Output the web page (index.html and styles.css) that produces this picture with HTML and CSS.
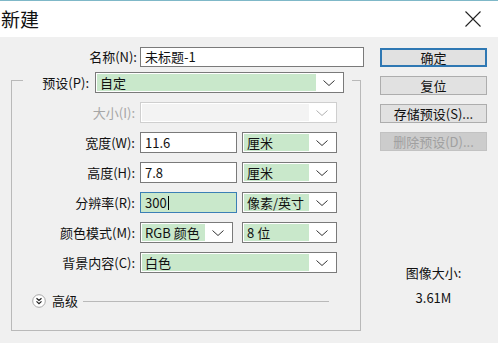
FILE: index.html
```html
<!DOCTYPE html>
<html lang="zh">
<head>
<meta charset="utf-8">
<title>新建</title>
<link rel="stylesheet" href="styles.css">
</head>
<body>
<div class="window">
  <div class="titlebar">
    <span class="title">新建</span>
    <svg class="close" width="16" height="16" viewBox="0 0 16 16"><path d="M0.5 0.5 L15.5 15.5 M15.5 0.5 L0.5 15.5" stroke="#222" stroke-width="1.1" fill="none"/></svg>
  </div>
  <div class="body">
    <div class="main">
      <div class="name-row">
        <span class="label">名称(N):</span>
        <div class="field name-field">未标题-1</div>
      </div>
      <fieldset class="group">
        <legend class="preset-row">
          <span class="label">预设(P):</span>
          <div class="select preset-select"><span class="fill">自定</span><span class="arrow"><svg width="12" height="6" viewBox="0 0 12 6"><path d="M0.5 0.5 L6 5.5 L11.5 0.5" stroke="#333" fill="none"/></svg></span></div>
        </legend>
        <div class="row">
          <span class="label disabled">大小(I):</span>
          <div class="select wide disabled-select"><span class="fill"></span><span class="arrow"><svg width="12" height="6" viewBox="0 0 12 6"><path d="M0.5 0.5 L6 5.5 L11.5 0.5" stroke="#b0b0b0" fill="none"/></svg></span></div>
        </div>
        <div class="row">
          <span class="label">宽度(W):</span>
          <div class="field num">11.6</div>
          <div class="select unit"><span class="fill">厘米</span><span class="arrow"><svg width="12" height="6" viewBox="0 0 12 6"><path d="M0.5 0.5 L6 5.5 L11.5 0.5" stroke="#333" fill="none"/></svg></span></div>
        </div>
        <div class="row">
          <span class="label">高度(H):</span>
          <div class="field num">7.8</div>
          <div class="select unit"><span class="fill">厘米</span><span class="arrow"><svg width="12" height="6" viewBox="0 0 12 6"><path d="M0.5 0.5 L6 5.5 L11.5 0.5" stroke="#333" fill="none"/></svg></span></div>
        </div>
        <div class="row">
          <span class="label">分辨率(R):</span>
          <div class="field num focused">300<span class="caret"></span></div>
          <div class="select unit"><span class="fill">像素/英寸</span><span class="arrow"><svg width="12" height="6" viewBox="0 0 12 6"><path d="M0.5 0.5 L6 5.5 L11.5 0.5" stroke="#333" fill="none"/></svg></span></div>
        </div>
        <div class="row">
          <span class="label">颜色模式(M):</span>
          <div class="select mode"><span class="fill">RGB 颜色</span><span class="arrow"><svg width="12" height="6" viewBox="0 0 12 6"><path d="M0.5 0.5 L6 5.5 L11.5 0.5" stroke="#333" fill="none"/></svg></span></div>
          <div class="select unit bits"><span class="fill">8 位</span><span class="arrow"><svg width="12" height="6" viewBox="0 0 12 6"><path d="M0.5 0.5 L6 5.5 L11.5 0.5" stroke="#333" fill="none"/></svg></span></div>
        </div>
        <div class="row">
          <span class="label">背景内容(C):</span>
          <div class="select wide"><span class="fill">白色</span><span class="arrow"><svg width="12" height="6" viewBox="0 0 12 6"><path d="M0.5 0.5 L6 5.5 L11.5 0.5" stroke="#333" fill="none"/></svg></span></div>
        </div>
        <div class="advanced">
          <svg class="adv-icon" width="14" height="14" viewBox="0 0 14 14"><circle cx="7" cy="7" r="6.3" fill="#fff" stroke="#a8a8a8"/><path d="M4.5 4.2 L7 6.4 L9.5 4.2 M4.5 7.4 L7 9.6 L9.5 7.4" stroke="#222" stroke-width="1.2" fill="none"/></svg>
          <span class="adv-text">高级</span>
          <span class="adv-line"></span>
        </div>
      </fieldset>
    </div>
    <div class="side">
      <div class="btn primary">确定</div>
      <div class="btn">复位</div>
      <div class="btn">存储预设(S)...</div>
      <div class="btn off">删除预设(D)...</div>
      <div class="info-label">图像大小:</div>
      <div class="info-value">3.61M</div>
    </div>
  </div>
</div>
</body>
</html>
```

FILE: styles.css
```css
* { box-sizing: border-box; }
html, body { margin: 0; padding: 0; }
body {
  font-family: "Noto Sans CJK SC", "Noto Sans", sans-serif;
  font-size: 13px;
  color: #111;
  background: #f0f0f0;
}
.window {
  width: 498px;
  height: 343px;
  background: #f0f0f0;
  overflow: hidden;
}
.titlebar {
  height: 37px;
  background: #fff;
  border-top: 1px solid #7fb8c8;
  display: flex;
  align-items: center;
  justify-content: space-between;
  padding: 0 17px 0 1px;
}
.title {
  font-size: 19px;
  line-height: 24px;
  color: #111;
  margin-top: -1px;
}
.close { display: block; }
.body {
  display: flex;
  padding: 10px 0 0 11px;
}
.main { width: 354px; }
.label {
  text-align: right;
  line-height: 20px;
  white-space: nowrap;
}
.label.disabled { color: #a6a6a6; }
.name-row {
  display: grid;
  grid-template-columns: 126px 224px;
  column-gap: 3px;
  height: 20px;
}
.field {
  height: 20px;
  border: 1px solid #7a7a7a;
  background: #fff;
  padding: 0 4px;
  line-height: 18px;
  white-space: nowrap;
}
.group {
  width: 350px;
  margin: 0;
  border: 1px solid #b9b9b9;
  padding: 9px 8px 21px 11px;
}
.preset-row {
  width: 329px;
  padding: 5px 8px 0 0;
  display: flex;
  align-items: center;
}
.preset-row .label { width: 66px; }
.preset-select { width: 249px; margin-left: 6px; height: 22px; }
.select {
  display: flex;
  height: 21px;
  border: 1px solid #7a7a7a;
  background: #fff;
  padding: 1px;
}
.select .fill {
  flex: 1;
  background: #c9e8cb;
  padding-left: 3px;
  line-height: 18px;
  white-space: nowrap;
}
.select .arrow {
  width: 26px;
  display: flex;
  align-items: center;
  justify-content: center;
}
.select .arrow svg { display: block; }
.row {
  display: flex;
  align-items: center;
  height: 21px;
  margin-bottom: 9px;
}
.row .label { width: 112px; margin-right: 5px; }
.wide { width: 197px; }
.num { width: 97px; height: 21px; line-height: 19px; }
.unit { width: 95px; margin-left: 5px; }
.mode { width: 93px; }
.bits { margin-left: 9px; }
.disabled-select { border-color: #cfcfcf; }
.disabled-select .fill { background: #f3f3f3; }
.focused {
  border-color: #3b7fb5;
  background: #c9e8cb;
  display: flex;
  align-items: center;
}
.caret {
  display: inline-block;
  width: 1px;
  height: 14px;
  background: #000;
  margin-left: 1px;
}
.advanced {
  display: flex;
  align-items: center;
  height: 16px;
  margin-top: 20px;
  padding-left: 9px;
}
.adv-icon { display: block; }
.adv-text { margin-left: 6px; line-height: 16px; }
.adv-line {
  flex: 1;
  height: 1px;
  background: #b9b9b9;
  margin: 1px 23px 0 5px;
}
.side {
  width: 107px;
  margin-left: 15px;
  padding-top: 1px;
}
.btn {
  height: 19px;
  border: 1px solid #adadad;
  background: #e1e1e1;
  text-align: center;
  line-height: 17px;
  margin-bottom: 9px;
  white-space: nowrap;
}
.btn.primary {
  border: 2px solid #2f78b3;
  line-height: 15px;
}
.btn.off {
  background: #cccccc;
  border-color: #c2c2c2;
  color: #a0a0a0;
}
.info-label {
  text-align: center;
  margin-top: 114px;
  line-height: 16px;
}
.info-value {
  text-align: center;
  margin-top: 9px;
  line-height: 16px;
}
```
